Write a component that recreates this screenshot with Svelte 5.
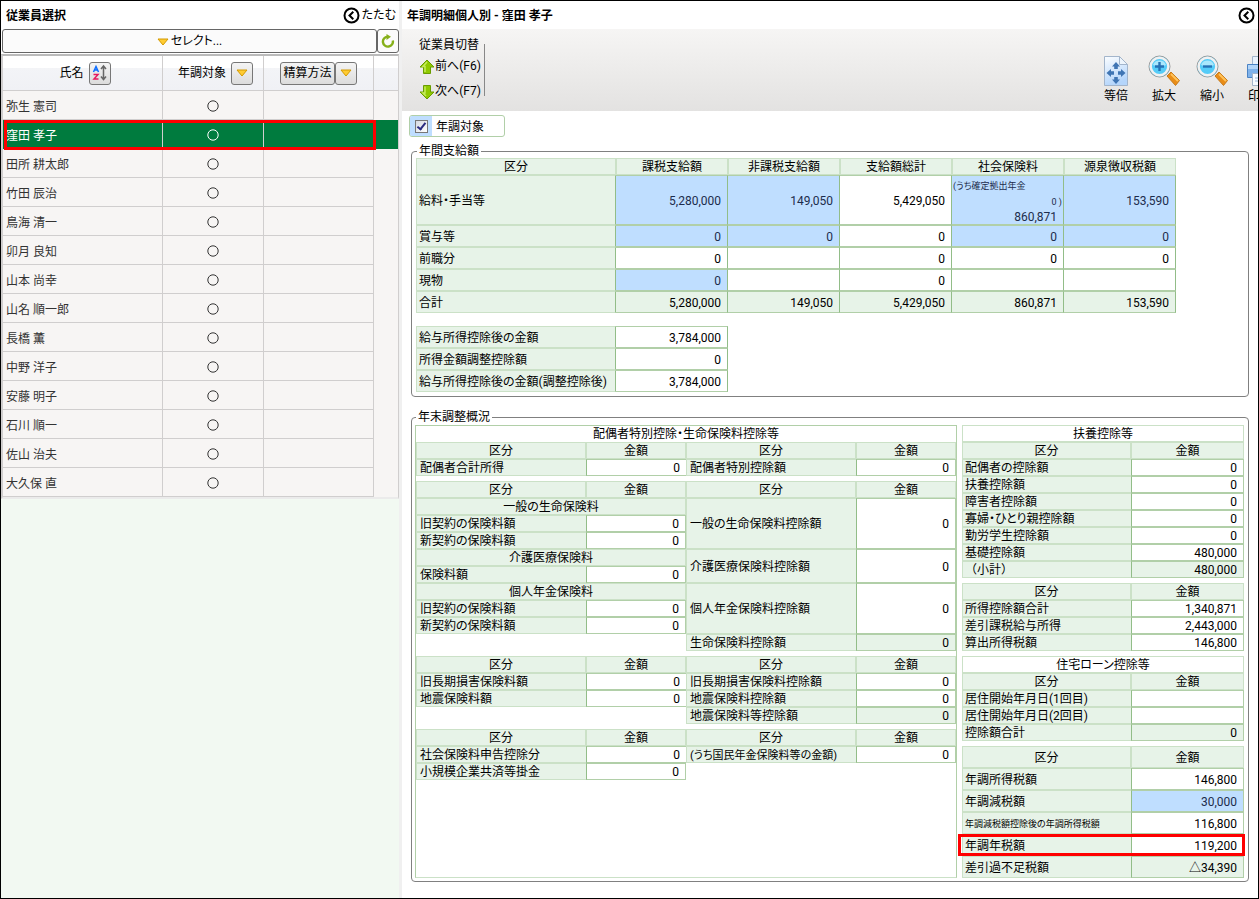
<script>
	let targeted = true;
	let selected = "窪田 孝子";

	const employees = [
		"弥生 憲司", "窪田 孝子", "田所 耕太郎", "竹田 辰治", "鳥海 清一",
		"卯月 良知", "山本 尚幸", "山名 順一郎", "長橋 薫", "中野 洋子",
		"安藤 明子", "石川 順一", "佐山 治夫", "大久保 直"
	];

	const payHead = ["区分", "課税支給額", "非課税支給額", "支給額総計", "社会保険料", "源泉徴収税額"];

	// b = editable (blue) cell
	const payRows = [
		{ label: "給料・手当等", tall: true, cells: [["5,280,000", "b"], ["149,050", "b"], ["5,429,050"], ["860,871", "b", "(うち確定拠出年金"], ["153,590", "b"]] },
		{ label: "賞与等", cells: [["0", "b"], ["0", "b"], ["0"], ["0", "b"], ["0", "b"]] },
		{ label: "前職分", cells: [["0"], [""], ["0"], ["0"], ["0"]] },
		{ label: "現物", cells: [["0", "b"], [""], ["0"], [""], [""]] },
		{ label: "合計", cells: [["5,280,000", "g"], ["149,050", "g"], ["5,429,050", "g"], ["860,871", "g"], ["153,590", "g"]] }
	];

	const incomeRows = [
		["給与所得控除後の金額", "3,784,000"],
		["所得金額調整控除額", "0"],
		["給与所得控除後の金額(調整控除後)", "3,784,000"]
	];

	const label = (t, rs = 1, kind = "label") => ({ t, rs, kind });
	const value = (t = "0", rs = 1, kind = "value") => ({ t, rs, kind });
	const section = (t) => ({ t, cs: 2, kind: "section" });
	const blank = { t: "", cs: 2, kind: "blank" };

	const deductions = [
		[
			[label("配偶者合計所得"), value(), label("配偶者特別控除額"), value()]
		],
		[
			[section("一般の生命保険料"), label("一般の生命保険料控除額", 3), value("0", 3)],
			[label("旧契約の保険料額"), value()],
			[label("新契約の保険料額"), value()],
			[section("介護医療保険料"), label("介護医療保険料控除額", 2), value("0", 2)],
			[label("保険料額"), value()],
			[section("個人年金保険料"), label("個人年金保険料控除額", 3), value("0", 3)],
			[label("旧契約の保険料額"), value()],
			[label("新契約の保険料額"), value()],
			[blank, label("生命保険料控除額"), value("0", 1, "value g")]
		],
		[
			[label("旧長期損害保険料額"), value(), label("旧長期損害保険料控除額"), value()],
			[label("地震保険料額"), value(), label("地震保険料控除額"), value()],
			[blank, label("地震保険料等控除額"), value("0", 1, "value g")]
		],
		[
			[label("社会保険料申告控除分"), value(), label("(うち国民年金保険料等の金額)", 1, "label small"), value()],
			[label("小規模企業共済等掛金"), value("0", 1, "value closed"), blank]
		]
	];

	const summaries = [
		{
			title: "扶養控除等",
			rows: [
				["配偶者の控除額", "0"], ["扶養控除額", "0"], ["障害者控除額", "0"],
				["寡婦・ひとり親控除額", "0"], ["勤労学生控除額", "0"],
				["基礎控除額", "480,000"], ["（小計）", "480,000", "g", "full"]
			]
		},
		{
			rows: [["所得控除額合計", "1,340,871"], ["差引課税給与所得", "2,443,000"], ["算出所得税額", "146,800"]]
		},
		{
			title: "住宅ローン控除等",
			rows: [["居住開始年月日(1回目)", ""], ["居住開始年月日(2回目)", ""], ["控除額合計", "0", "g"]]
		},
		{
			roomy: true,
			rows: [
				["年調所得税額", "146,800"],
				["年調減税額", "30,000", "b"],
				["年調減税額控除後の年調所得税額", "116,800", "", "tiny"],
				["年調年税額", "119,200", "", "marked"],
				["差引過不足税額", "△34,390", "g"]
			]
		}
	];
</script>

<div class="app">
	<aside>
		<header>
			<h1>従業員選択</h1>
			<button class="fold">
				<svg width="17" height="17" viewBox="0 0 17 17"><circle cx="8.500" cy="8.500" r="7" fill="none" stroke="#000" stroke-width="2"/><path d="M10.300 4.800 6.500 8.500l3.800 3.700" fill="none" stroke="#000" stroke-width="2"/></svg>
				たたむ
			</button>
		</header>

		<div class="filter">
			<button class="select">
				<svg width="12" height="8" viewBox="0 0 12 8"><path d="M1 1h10L6 7z" fill="#fc3" stroke="#d49a00"/></svg>
				セレクト...
			</button>
			<button class="reload" aria-label="更新">
				<svg width="14" height="14" viewBox="0 0 14 14"><path d="M11.800 6.500A5 5 0 1 1 6.500 2.600" fill="none" stroke="#86b01a" stroke-width="2.400"/><path d="M5.500 0 10 2.800 5.500 6z" fill="#86b01a"/></svg>
			</button>
		</div>

		<div class="list">
			<table class="employees">
				<colgroup><col class="c-name"><col class="c-target"><col class="c-method"><col></colgroup>
				<thead>
					<tr>
						<th>
							<div class="head">
								氏名
								<button class="icon" aria-label="並べ替え">
									<svg width="16" height="18" viewBox="0 0 16 18">
										<path d="M1.500 8 4 2.500 6.500 8M2.300 6h3.400" fill="none" stroke="#0a6cff" stroke-width="1.500"/>
										<path d="M1.500 10.500h4.500l-4 4.500h4.500" fill="none" stroke="#e5195f" stroke-width="1.500"/>
										<path d="M11.500 2v13M9 5l2.500-3L14 5M9 12.500l2.500 3 2.500-3" fill="none" stroke="#666" stroke-width="1.500"/>
									</svg>
								</button>
							</div>
						</th>
						<th>
							<div class="head">
								年調対象
								<button class="icon" aria-label="年調対象の絞り込み">
									<svg width="12" height="8" viewBox="0 0 12 8"><path d="M1 1h10L6 7z" fill="#fc3" stroke="#d49a00"/></svg>
								</button>
							</div>
						</th>
						<th>
							<div class="head joined">
								<button class="method">精算方法</button>
								<button class="icon" aria-label="精算方法の絞り込み">
									<svg width="12" height="8" viewBox="0 0 12 8"><path d="M1 1h10L6 7z" fill="#fc3" stroke="#d49a00"/></svg>
								</button>
							</div>
						</th>
						<th></th>
					</tr>
				</thead>
				<tbody>
					{#each employees as name}
						<tr class:selected={name == selected} on:click={() => selected = name}>
							<td class="name">{name}</td>
							<td class="mark"><svg width="12" height="12" viewBox="0 0 12 12" role="img" aria-label="対象"><circle cx="6" cy="6" r="5.200" fill="none" stroke="currentColor"/></svg></td>
							<td></td>
							<td></td>
						</tr>
					{/each}
				</tbody>
			</table>
		</div>
	</aside>

	<main>
		<header>
			<h1>年調明細個人別 - 窪田 孝子</h1>
			<button class="fold" aria-label="たたむ">
				<svg width="17" height="17" viewBox="0 0 17 17"><circle cx="8.500" cy="8.500" r="7" fill="none" stroke="#000" stroke-width="2"/><path d="M10.300 4.800 6.500 8.500l3.800 3.700" fill="none" stroke="#000" stroke-width="2"/></svg>
			</button>
		</header>

		<div class="toolbar">
			<div class="switch">
				<span>従業員切替</span>
				<button>
					<svg width="16" height="16" viewBox="0 0 16 16"><path d="M8 1 15 8h-3.500v6.500h-7V8H1z" fill="#8fc900" stroke="#6a9c00"/><path d="M8 3 4 7.500h2V13" fill="none" stroke="#c5ec5a" stroke-width="1.500"/></svg>
					前へ(F6)
				</button>
				<button>
					<svg width="16" height="16" viewBox="0 0 16 16"><path d="M8 15 15 8h-3.500V1.500h-7V8H1z" fill="#8fc900" stroke="#6a9c00"/><path d="M6 2.500V9H4l3 3" fill="none" stroke="#c5ec5a" stroke-width="1.500"/></svg>
					次へ(F7)
				</button>
			</div>
			<div class="separator"></div>

			<div class="actions">
				<button>
					<svg width="32" height="32" viewBox="0 0 32 32">
						<defs><linearGradient id="paper" x2="0.300" y2="1"><stop offset="0" stop-color="#fbfdff"/><stop offset="1" stop-color="#b4d5fb"/></linearGradient></defs>
						<path d="M4.500 1.500h15l8 8v21h-23z" fill="url(#paper)" stroke="#a3b5cb"/>
						<path d="M19.500 1.500v8h8z" fill="#eef5fc" stroke="#a3b5cb"/>
						<g fill="#3f75b4"><path d="m16 7 4 4.500h-2.200V14h-3.600v-2.500H12z"/><path d="m16 29-4-4.500h2.200V22h3.600v2.500H20z"/><path d="m6.500 18 4.500-4v2.200h3v3.600h-3V22z"/><path d="m25.500 18-4.500-4v2.200h-3v3.600h3V22z"/></g>
					</svg>
					等倍
				</button>
				<button>
					<svg width="32" height="32" viewBox="0 0 32 32">
						<path d="m19 21 4-4 8.500 8.500-4 5z" fill="#e98d17" stroke="#c77b1c"/><path d="m23 19 7 7" stroke="#ffc35c" stroke-width="2"/>
						<circle cx="11.500" cy="11.500" r="10.500" fill="#55ccf8" stroke="#999"/><circle cx="11.500" cy="11.500" r="8.800" fill="none" stroke="#f1f1f1" stroke-width="2.400"/>
						<path d="M5 10a7 7 0 0 1 13 0q-6 3-13 0" fill="#a9e7fc"/><path d="M7 11.500h9M11.500 7v9" stroke="#2672b5" stroke-width="2.400"/>
					</svg>
					拡大
				</button>
				<button>
					<svg width="32" height="32" viewBox="0 0 32 32">
						<path d="m19 21 4-4 8.500 8.500-4 5z" fill="#e98d17" stroke="#c77b1c"/><path d="m23 19 7 7" stroke="#ffc35c" stroke-width="2"/>
						<circle cx="11.500" cy="11.500" r="10.500" fill="#55ccf8" stroke="#999"/><circle cx="11.500" cy="11.500" r="8.800" fill="none" stroke="#f1f1f1" stroke-width="2.400"/>
						<path d="M5 10a7 7 0 0 1 13 0q-6 3-13 0" fill="#a9e7fc"/><path d="M7 11.500h9" stroke="#2672b5" stroke-width="2.400"/>
					</svg>
					縮小
				</button>
				<button>
					<svg width="32" height="32" viewBox="0 0 32 32">
						<path d="M8.500 1.500h16v10h-16z" fill="#e9f2fc" stroke="#a3b5cb"/>
						<path d="M3.500 9.500h26v13h-26z" fill="#7fb2ea" stroke="#4b83c4"/><path d="M4 10h25v4H4z" fill="#b3d5f8"/>
						<path d="M8.500 18.500h16v12h-16z" fill="#f7fbff" stroke="#a3b5cb"/><path d="M11 23h11M11 26h11" stroke="#9ab8dc"/>
					</svg>
					印刷
				</button>
			</div>
		</div>

		<div class="content">
			<label class="target">
				<span class="box"><input type="checkbox" bind:checked={targeted}></span>
				<span class="caption">年調対象</span>
			</label>

			<fieldset>
				<legend>年間支給額</legend>
				<table class="grid pay">
					<colgroup><col class="first">{#each payHead.slice(1) as h}<col>{/each}</colgroup>
					<thead>
						<tr>{#each payHead as h}<th>{h}</th>{/each}</tr>
					</thead>
					<tbody>
						{#each payRows as row}
							<tr class={row.tall ? "tall" : "roomy"}>
								<td class="label">{row.label}</td>
								{#each row.cells as [text, kind, note]}
									<td class="value {kind || ''}">
										{#if note}
											<div class="note">{note}</div>
											<div class="note end">0 )</div>
										{/if}
										{text}
									</td>
								{/each}
							</tr>
						{/each}
					</tbody>
				</table>

				<table class="grid income">
					<colgroup><col class="first"><col></colgroup>
					<tbody>
						{#each incomeRows as [name, amount]}
							<tr class="roomy"><td class="label">{name}</td><td class="value">{amount}</td></tr>
						{/each}
					</tbody>
				</table>
			</fieldset>

			<fieldset class="overview">
				<legend>年末調整概況</legend>
				<div class="columns">
					<div class="deductions">
						<div class="title">配偶者特別控除・生命保険料控除等</div>
						{#each deductions as rows}
							<table class="grid quad">
								<colgroup><col class="wide"><col><col class="wide"><col></colgroup>
								<thead>
									<tr><th>区分</th><th>金額</th><th>区分</th><th>金額</th></tr>
								</thead>
								<tbody>
									{#each rows as row}
										<tr>
											{#each row as cell}
												<td class={cell.kind} colspan={cell.cs || 1} rowspan={cell.rs || 1}>{cell.t}</td>
											{/each}
										</tr>
									{/each}
								</tbody>
							</table>
						{/each}
					</div>

					<div class="summaries">
						{#each summaries as group}
							<table class="grid pair">
								<colgroup><col class="item"><col></colgroup>
								<thead>
									{#if group.title}
										<tr><th class="white" colspan="2">{group.title}</th></tr>
									{/if}
									<tr class:roomy={group.roomy}><th>区分</th><th>金額</th></tr>
								</thead>
								<tbody>
									{#each group.rows as [name, amount, kind, style]}
										<tr class:roomy={group.roomy} class:marked={style == "marked"}>
											<td class="label" class:tiny={style == "tiny"} class:full={style == "full"}>{name}</td>
											<td class="value {kind || ''}">{amount}</td>
										</tr>
									{/each}
								</tbody>
							</table>
						{/each}
					</div>
				</div>
			</fieldset>
		</div>
	</main>
</div>

<style>
	:global(body) {
		margin: 0;
	}

	.app {
		display: grid;
		grid-template-columns: 401px minmax(0, 1fr);
		box-sizing: border-box;
		min-height: 100vh;
		border: 1px solid #000;
		background: #fff;
		color: #000;
		font-family: Roboto, "Noto Sans CJK JP", sans-serif;
		font-size: 12px;
		line-height: 15px;
		/* proportional kana, as in the desktop UI fonts */
		font-feature-settings: "palt";
		overflow: hidden;
	}

	button {
		display: flex;
		align-items: center;
		justify-content: center;
		margin: 0;
		padding: 0;
		border: 0;
		background: none;
		color: inherit;
		font: inherit;
		font-feature-settings: inherit;
		cursor: pointer;
	}

	header {
		display: flex;
		align-items: center;
		justify-content: space-between;
		box-sizing: border-box;
		height: 28px;
		padding: 1px 3px 0 5px;
		background: #fff;
	}

	h1 {
		margin: 0;
		padding-top: 1px;
		font-size: 12px;
		font-weight: bold;
	}

	.fold {
		gap: 2px;
	}

	/* employee list */
	aside {
		display: flex;
		flex-direction: column;
		border-right: 3px solid #f0f0f0;
		background: #f2f9f2;
	}

	.filter {
		display: flex;
		height: 24px;
		padding: 0 0 1px 1px;
		background: #fff;
	}

	.select, .reload {
		border: 1px solid #666;
		border-radius: 3px;
		background: #fbfbfb;
	}

	.select {
		flex: 1;
		gap: 2px;
		padding-top: 1px;
	}

	.reload {
		width: 22px;
	}

	.list {
		border: 1px solid #d0cece;
		border-width: 2px 1px 2px 2px;
		border-top-color: #bbb;
		border-bottom-color: #ebebeb;
	}

	.employees {
		width: 100%;
		table-layout: fixed;
		border-collapse: separate;
		border-spacing: 0;
		background: #f7f5f4;
		color: #333;
	}

	.c-name { width: 160px; }
	.c-target { width: 101px; }
	.c-method { width: 110px; }

	.employees th, .employees td {
		box-sizing: border-box;
		padding: 0 3px;
		border-right: 1px solid #d0cece;
		border-bottom: 1px solid #d0cece;
	}

	.employees th {
		height: 35px;
		background: linear-gradient(#fff 12px, #f3f4f7 12px, #f0f1f5);
		color: #000;
		font-weight: normal;
	}

	.employees td {
		height: 29px;
		padding-top: 2px;
	}

	.employees .name {
		padding-top: 4px;
	}

	.employees td:last-child, .employees th:last-child {
		border-right: 0;
	}

	.employees td:last-child {
		border-bottom-color: transparent;
	}

	.employees .mark {
		text-align: center;
	}

	.mark svg {
		display: block;
		margin: 0 auto;
	}

	.employees .selected {
		position: relative;
		background: #007b3e;
		color: #fff;
	}

	.employees .selected td {
		border-bottom-color: #007b3e;
	}

	.selected .name::after {
		content: "";
		position: absolute;
		inset: 0 22px -1px 1px;
		border: 3px solid #f00;
	}

	.head {
		display: flex;
		align-items: center;
		justify-content: center;
		gap: 5px;
		padding-left: 5px;
	}

	.joined {
		gap: 0;
		padding-left: 0;
	}

	.icon, .method {
		box-sizing: border-box;
		height: 23px;
		border: 1px solid #777;
		border-radius: 3px;
		background: linear-gradient(#f4f4f4, #dcdcdc);
	}

	.icon {
		width: 22px;
	}

	.method {
		padding: 0 2px;
	}

	/* toolbar */
	.toolbar {
		display: flex;
		align-items: flex-start;
		box-sizing: border-box;
		height: 82px;
		padding: 8px 0 0 17px;
		background: linear-gradient(#f6f5f4, #e3e2e1);
		overflow: hidden;
	}

	.switch {
		display: flex;
		flex-direction: column;
		align-items: flex-start;
		line-height: 17px;
	}

	.switch button {
		height: 25px;
	}

	.separator {
		width: 1px;
		height: 52px;
		margin: 7px 0 0 3px;
		background: #888;
	}

	.actions {
		display: flex;
		margin: 18px -26px 0 auto;
	}

	.actions button {
		flex-direction: column;
		gap: 2px;
		width: 48px;
	}

	.content {
		padding: 4px 9px 16px;
	}

	.target {
		display: flex;
		align-items: center;
		gap: 4px;
		box-sizing: border-box;
		width: 96px;
		height: 22px;
		margin: 0 0 7px -2px;
		border: 1px solid #b1cfa8;
		border-radius: 3px;
		overflow: hidden;
	}

	.box {
		display: flex;
		align-items: center;
		justify-content: center;
		width: 22px;
		height: 100%;
		background: #bfdeff;
	}

	.caption {
		padding-top: 3px;
	}

	.target input {
		appearance: none;
		box-sizing: border-box;
		display: flex;
		justify-content: center;
		width: 13px;
		height: 13px;
		margin: 0;
		border: 1px solid #777;
		background: linear-gradient(135deg, #d5d9e2, #fff);
	}

	.target input:checked::after {
		content: "";
		width: 3px;
		height: 7px;
		border: solid #2b2b80;
		border-width: 0 2px 2px 0;
		transform: rotate(38deg);
	}

	fieldset {
		min-width: 0;
		margin: 0;
		padding: 0 4px 4px;
		border: 1px solid #808080;
		border-radius: 4px;
	}

	legend {
		margin-left: 1px;
		padding: 0 2px;
		line-height: 14px;
	}

	/* tables */
	.grid {
		table-layout: fixed;
		border-collapse: separate;
		border-spacing: 0;
		line-height: 13px;
	}

	.grid tr {
		height: 17px;
	}

	.grid tr.roomy {
		height: 22px;
	}

	.grid tr.tall {
		height: 50px;
	}

	.grid th, .grid td {
		box-sizing: border-box;
		padding: 2px 0 0;
		white-space: nowrap;
	}

	.grid th, .section {
		border: 1px solid #cbe1c7;
		background: #e7f3e8;
		font-weight: normal;
		text-align: center;
	}

	.grid .white {
		background: #fff;
	}

	.grid .label {
		padding-left: 2px;
		border: solid #cbe1c7;
		border-width: 1px 0 1px 1px;
		background: #e7f3e8;
	}

	.grid .value {
		padding-right: 6px;
		border: solid #b1cfa8;
		border-width: 1px 0 1px 1px;
		border-left-color: #92bd88;
		text-align: right;
	}

	.grid .value:last-child, .grid .closed {
		padding-right: 6px;
		border-right-width: 1px;
	}

	.grid .b {
		background: #bfdeff;
		color: #1c2c4c;
	}

	.grid .g {
		background: #e7f3e8;
	}

	.note {
		padding-left: 1px;
		font-size: 9px;
		line-height: 15px;
		text-align: left;
	}

	.note.end {
		margin-right: -5px;
		line-height: 17px;
		text-align: right;
	}

	.pay {
		width: 760px;
	}

	.income {
		width: 312px;
		margin-top: 13px;
	}

	.pay .label, .pay .value, .income .label, .income .value {
		border-width: 1px 1px 1px 0;
		border-right-color: #92bd88;
	}

	.pay .label, .income .label {
		border-left-width: 1px;
	}

	.first {
		width: 200px;
	}

	.overview {
		margin-top: 13px;
		padding: 1px 4px 3px 3px;
	}

	.columns {
		display: grid;
		grid-template-columns: 542fr 282fr;
		gap: 5px;
	}

	.deductions, .summaries {
		display: flex;
		flex-direction: column;
		gap: 5px;
	}

	.deductions {
		border: 1px solid #b1cfa8;
		border-bottom-color: #cbe1c7;
	}

	.title {
		height: 16px;
		margin-bottom: -5px;
		line-height: 17px;
		text-align: center;
	}

	.quad, .pair {
		width: 100%;
	}

	.quad .label {
		padding-left: 3px;
	}

	.wide {
		width: 170px;
	}

	.item {
		width: 60%;
	}

	.small {
		font-size: 11px;
	}

	.tiny {
		font-size: 9px;
	}

	.full {
		font-feature-settings: normal;
	}

	.marked {
		position: relative;
	}

	.marked .label::after {
		content: "";
		position: absolute;
		inset: 0 -1px 0 -4px;
		border: 3px solid #f00;
	}
</style>
